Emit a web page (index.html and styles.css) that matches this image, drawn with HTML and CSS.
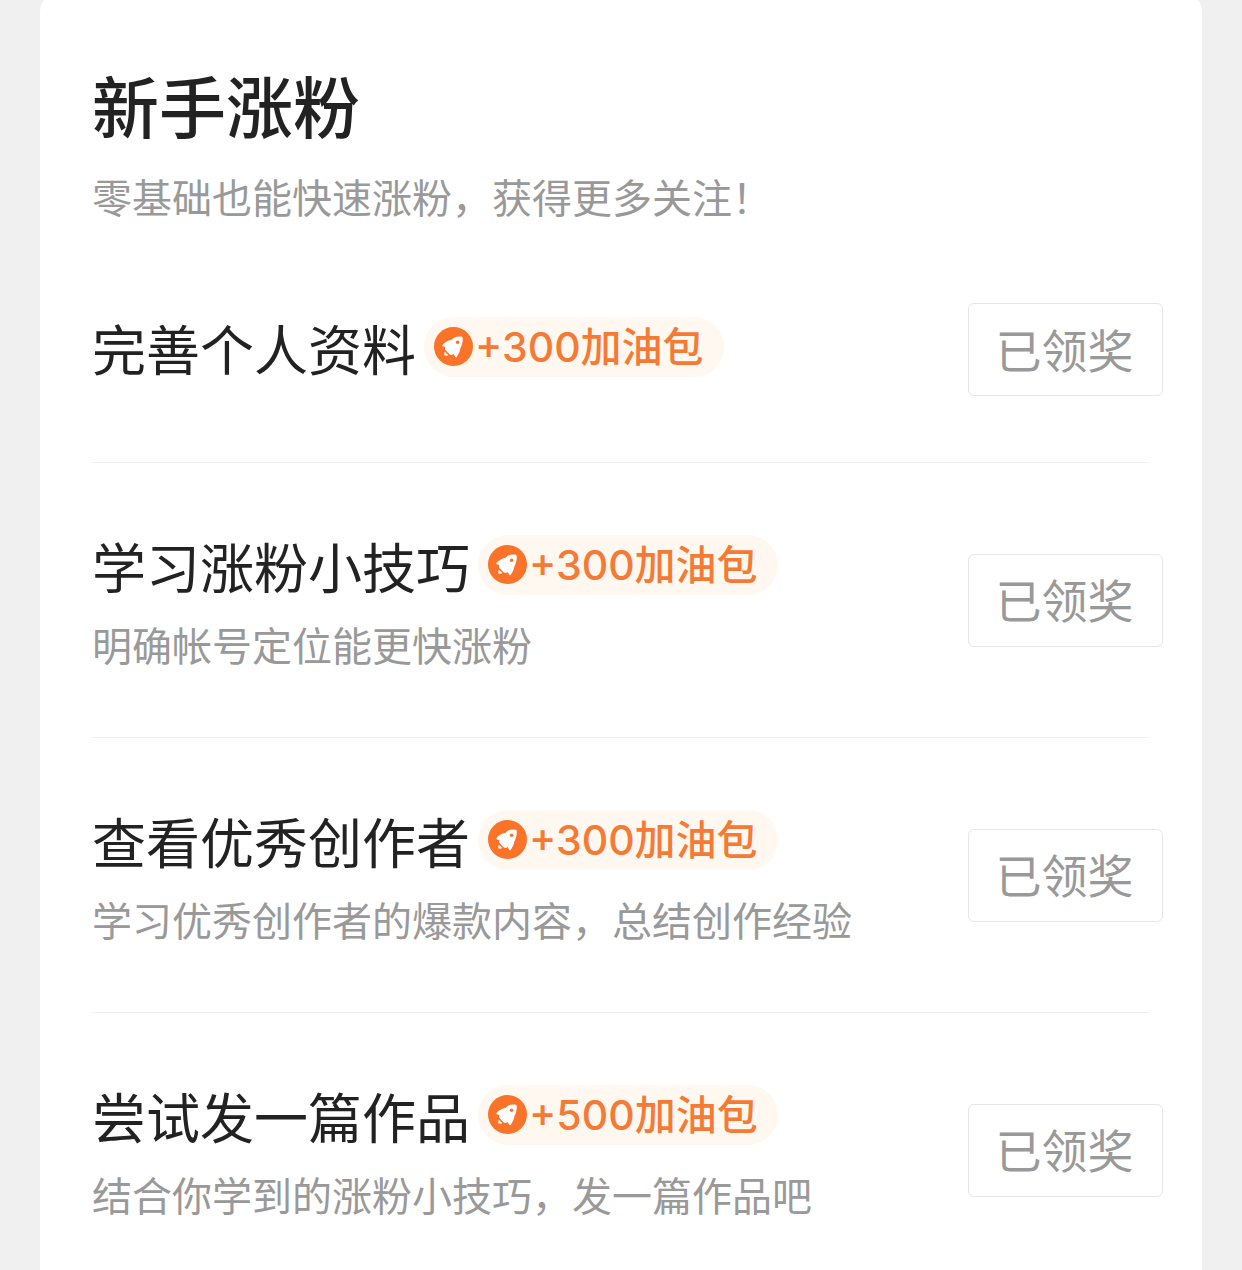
FILE: index.html
```html
<!DOCTYPE html>
<html lang="zh-CN">
<head>
<meta charset="utf-8">
<meta name="viewport" content="width=device-width, initial-scale=1">
<title>新手涨粉</title>
<link rel="stylesheet" href="styles.css">
</head>
<body>
<svg width="0" height="0" class="sprite" aria-hidden="true">
  <symbol id="rocket" viewBox="0 0 40 40">
    <circle cx="20" cy="20" r="20" fill="#fb7329"/>
    <path fill="#fff" d="M28.500 10C24.500 9 21 10 18 13C14 14 11 15.500 8.800 18.200C8.200 19 8.600 19.700 9.400 19.900L11.800 20.400C11 22 11.200 23.200 12.200 24.200L16 27.900C17.200 29 18.700 28.700 20.200 27.700L21.800 30.500C22.200 31.300 23 31.400 23.400 30.600C25.500 27.500 26.600 24.500 27.200 21.500C29 18 29.800 14.500 29.400 11C29.300 10.400 29 10.100 28.500 10Z"/>
    <path fill="#fff" d="M11.200 25.300L14.600 28.800C13.600 29.700 12.300 29.500 10.700 29.300C10.500 27.800 10.400 26.300 11.200 25.300Z"/>
    <circle cx="24.200" cy="15.600" r="1.800" fill="#fb7329"/>
  </symbol>
</svg>
<main class="card">
  <header class="head">
    <h1 class="head-title">新手涨粉</h1>
    <p class="desc">零基础也能快速涨粉，获得更多关注！</p>
  </header>
  <ul class="tasks">
    <li class="task">
      <div class="info">
        <div class="line"><h2 class="name">完善个人资料</h2><span class="badge"><svg class="icon" aria-hidden="true"><use href="#rocket"/></svg>+300加油包</span></div>
      </div>
      <button class="claim" type="button">已领奖</button>
    </li>
    <li class="task">
      <div class="info">
        <div class="line"><h2 class="name">学习涨粉小技巧</h2><span class="badge"><svg class="icon" aria-hidden="true"><use href="#rocket"/></svg>+300加油包</span></div>
        <p class="desc">明确帐号定位能更快涨粉</p>
      </div>
      <button class="claim" type="button">已领奖</button>
    </li>
    <li class="task">
      <div class="info">
        <div class="line"><h2 class="name">查看优秀创作者</h2><span class="badge"><svg class="icon" aria-hidden="true"><use href="#rocket"/></svg>+300加油包</span></div>
        <p class="desc">学习优秀创作者的爆款内容，总结创作经验</p>
      </div>
      <button class="claim" type="button">已领奖</button>
    </li>
    <li class="task">
      <div class="info">
        <div class="line"><h2 class="name">尝试发一篇作品</h2><span class="badge"><svg class="icon" aria-hidden="true"><use href="#rocket"/></svg>+500加油包</span></div>
        <p class="desc">结合你学到的涨粉小技巧，发一篇作品吧</p>
      </div>
      <button class="claim" type="button">已领奖</button>
    </li>
  </ul>
</main>
</body>
</html>
```
FILE: styles.css
```css
* {
  box-sizing: border-box;
}

body {
  margin: 0;
  background: #f0f0f0;
  color: #222;
  font-family: "Noto Sans CJK SC", sans-serif;
}

h1, h2, p, ul {
  margin: 0;
  padding: 0;
  font-weight: 400;
}

.sprite {
  position: absolute;
}

.card {
  min-height: calc(100vh + 8px);
  margin: -8px 40px 0;
  padding: 72px 52px 0;
  border-radius: 20px 20px 0 0;
  background: #fff;
}

.head {
  display: grid;
  gap: 29px;
  margin-bottom: 14px;
}

.head-title {
  font-size: 67px;
  font-weight: 500;
  line-height: 80px;
}

.desc {
  padding-bottom: 4px;
  color: #999;
  font-size: 40px;
  line-height: 46px;
}

.tasks {
  list-style: none;
}

.task {
  display: flex;
  align-items: center;
  justify-content: space-between;
  padding: 66px 0;
  border-bottom: 1px solid #f0f0f0;
}

.task:last-child {
  padding-bottom: 44px;
  border-bottom: 0;
}

.info {
  display: grid;
  gap: 15px;
}

.line {
  display: flex;
  align-items: center;
  gap: 8px;
  height: 77px;
}

.name {
  margin-bottom: 4px;
  font-size: 54px;
  line-height: 77px;
}

.badge {
  display: flex;
  align-items: center;
  gap: 2px;
  height: 60px;
  margin-bottom: 6px;
  padding: 0 20px 0 10px;
  border-radius: 30px;
  background: #fef8f0;
  color: #f47a35;
  font-family: Inter, "Noto Sans CJK SC", sans-serif;
  font-size: 41px;
  font-weight: 500;
  line-height: 60px;
}

.icon {
  width: 39px;
  height: 39px;
}

.claim {
  flex: none;
  width: 195px;
  height: 93px;
  margin-right: -13px;
  padding: 0 2px 4px 0;
  border: 1px solid #e6e6e6;
  border-radius: 6px;
  background: #fff;
  color: #999;
  font-family: inherit;
  font-size: 46px;
  line-height: 60px;
}
```
